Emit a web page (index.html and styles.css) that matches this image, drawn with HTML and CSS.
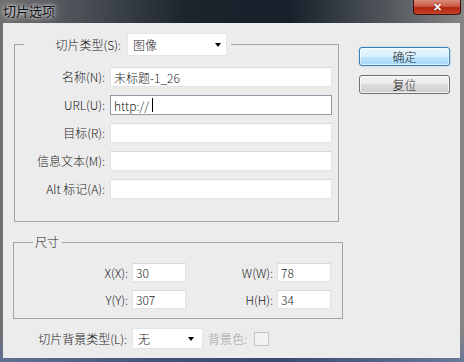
FILE: index.html
```html
<!DOCTYPE html>
<html lang="zh-CN">
<head>
  <meta charset="UTF-8">
  <title>切片选项</title>
  <link rel="stylesheet" href="styles.css">
</head>
<body>

  <div class="window">
    <div class="titlebar">
      <span class="title">切片选项</span>
      <button class="close" type="button">&#x2715;</button>
    </div>

    <div class="client">
      <form class="main" id="slice-form">
        <fieldset class="group slice">
          <legend class="combo-legend">
            <label for="slice-type" class="legend-label">切片类型(S):</label>
            <div class="select type-select" id="slice-type"><span>图像</span><i class="arrow"></i></div>
          </legend>

          <div class="fields">
            <label for="name">名称(N):</label>
            <input type="text" id="name" value="未标题-1_26">

            <label for="url">URL(U):</label>
            <span class="caret-wrap">
              <input type="text" id="url" class="focused" value="http://">
              <i class="caret"></i>
            </span>

            <label for="target">目标(R):</label>
            <input type="text" id="target">

            <label for="message">信息文本(M):</label>
            <input type="text" id="message">

            <label for="alt">Alt 标记(A):</label>
            <input type="text" id="alt">
          </div>
        </fieldset>

        <fieldset class="group size">
          <legend class="size-legend">尺寸</legend>
          <div class="dims">
            <label for="x">X(X):</label>
            <input type="text" id="x" value="30">
            <label for="w">W(W):</label>
            <input type="text" id="w" value="78">

            <label for="y">Y(Y):</label>
            <input type="text" id="y" value="307">
            <label for="h">H(H):</label>
            <input type="text" id="h" value="34">
          </div>
        </fieldset>

        <div class="bg-row">
          <label for="bg-type" class="bg-label">切片背景类型(L):</label>
          <div class="select bg-select" id="bg-type"><span>无</span><i class="arrow"></i></div>
          <span class="disabled">背景色:</span>
          <span class="swatch"></span>
        </div>
      </form>

      <div class="actions">
        <button type="submit" form="slice-form" class="btn default">确定</button>
        <button type="button" class="btn">复位</button>
      </div>
    </div>
  </div>

</body>
</html>
```

FILE: styles.css
```css
body {
  margin: 0;
  width: 464px;
  height: 362px;
  overflow: hidden;
  font-family: "Noto Sans CJK SC", sans-serif;
  font-size: 12px;
  font-weight: 300;
  color: #1c1c1c;
  background: #202830;
}

.window {
  width: 464px;
  height: 362px;
  box-sizing: border-box;
  padding: 0 4px 4px 3px;
  display: flex;
  flex-direction: column;
  background:
    linear-gradient(180deg, rgba(0, 0, 0, 0) 0, rgba(0, 0, 0, 0) 330px, rgba(90, 110, 170, 0.6) 362px),
    linear-gradient(90deg, #6f6f6f 0%, #4a4f56 18%, #1c242d 40%, #16202a 62%, #4e5359 82%, #858585 100%);
}

.titlebar {
  height: 23px;
  display: flex;
  justify-content: space-between;
  align-items: flex-start;
}

.title {
  padding-top: 3px;
  line-height: 16px;
  font-size: 13px;
  font-weight: 400;
  color: #101010;
  text-shadow: 0 0 6px rgba(255, 255, 255, 0.9), 0 0 3px rgba(255, 255, 255, 0.8);
}

.close {
  width: 48px;
  height: 15px;
  margin-right: -1px;
  padding: 0;
  border: 1px solid #3b120c;
  border-top: none;
  border-radius: 0 0 4px 4px;
  background: linear-gradient(180deg, #d98a7c 0%, #c95a45 45%, #b3260f 55%, #c4442b 100%);
  color: #fff;
  font-size: 11px;
  font-weight: bold;
  line-height: 13px;
  text-shadow: 0 0 2px #5a0d00;
}

.client {
  flex: 1;
  display: flex;
  background: #ececec;
}

.main {
  width: 330px;
  margin-left: 10px;
  padding-top: 10px;
}

.group {
  margin: 0;
  border: 1px solid #a3a3a3;
  min-width: 0;
}

.slice {
  margin: 0 4px 0 1px;
  padding: 11px 0 22px 0;
}

.combo-legend {
  display: flex;
  align-items: center;
  height: 23px;
  margin-left: 9px;
  padding: 0 4px 0 0;
}

.legend-label {
  width: 97px;
  margin-right: 6px;
  text-align: right;
  line-height: 16px;
}

.select {
  display: flex;
  align-items: center;
  justify-content: space-between;
  box-sizing: border-box;
  background: #fff;
  border: 1px solid #e4e4e4;
  line-height: 16px;
}

.type-select {
  width: 100px;
  height: 23px;
  padding: 0 5px 0 5px;
}

.arrow {
  width: 0;
  height: 0;
  border-left: 3px solid transparent;
  border-right: 3px solid transparent;
  border-top: 4px solid #000;
}

.fields {
  display: grid;
  grid-template-columns: 90px 222px;
  column-gap: 5px;
  row-gap: 8px;
  align-items: center;
}

label {
  line-height: 16px;
}

.fields label,
.dims label {
  text-align: right;
}

input[type="text"] {
  box-sizing: border-box;
  width: 100%;
  height: 20px;
  margin: 0;
  padding: 0 3px;
  border: 1px solid #e3e3e3;
  border-top-color: #d8d8d8;
  background: #fff;
  font-family: "Noto Sans CJK SC", sans-serif;
  font-size: 12px;
  font-weight: 300;
  color: #1c1c1c;
  outline: none;
}

input.focused {
  border-color: #8d99a6;
}

.caret-wrap {
  position: relative;
  display: block;
}

.caret {
  position: absolute;
  left: 42px;
  top: 3px;
  width: 1px;
  height: 14px;
  background: #000;
}

.size {
  margin-top: 12px;
  padding: 13px 0 9px 0;
}

.size-legend {
  margin-left: 19px;
  padding: 0 3px 0 2px;
  line-height: 16px;
}

.dims {
  display: grid;
  grid-template-columns: 114px 54px 83px 54px;
  column-gap: 4px;
  row-gap: 8px;
  align-items: center;
}

.dims input[type="text"] {
  height: 19px;
}

.bg-row {
  display: flex;
  align-items: center;
  margin-top: 9px;
}

.bg-label {
  width: 114px;
  text-align: right;
}

.bg-select {
  width: 71px;
  height: 21px;
  margin-left: 5px;
  padding: 0 8px 0 5px;
}

.disabled {
  margin-left: 5px;
  color: #a2a2a2;
  line-height: 16px;
}

.swatch {
  width: 13px;
  height: 12px;
  margin-left: 7px;
  border: 1px solid #c4c4c4;
  background: #f2f2f2;
}

.actions {
  display: flex;
  flex-direction: column;
  gap: 9px;
  margin-left: 16px;
  padding-top: 24px;
}

.btn {
  width: 91px;
  height: 19px;
  padding: 0;
  border: 1px solid #707070;
  border-radius: 3px;
  background: linear-gradient(180deg, #f2f2f2 0%, #ebebeb 50%, #dddddd 50%, #cfcfcf 100%);
  box-shadow: inset 0 0 0 1px rgba(255, 255, 255, 0.7);
  font-family: "Noto Sans CJK SC", sans-serif;
  font-size: 12px;
  font-weight: 300;
  line-height: 16px;
  color: #1c1c1c;
}

.btn.default {
  border-color: #3c7fb1;
  background: linear-gradient(180deg, #eaf6fd 0%, #d9f0fc 50%, #bee6fd 50%, #a7d9f5 100%);
  box-shadow: inset 0 0 0 1px rgba(255, 255, 255, 0.6), 0 0 2px #7fc4ec;
}
```
